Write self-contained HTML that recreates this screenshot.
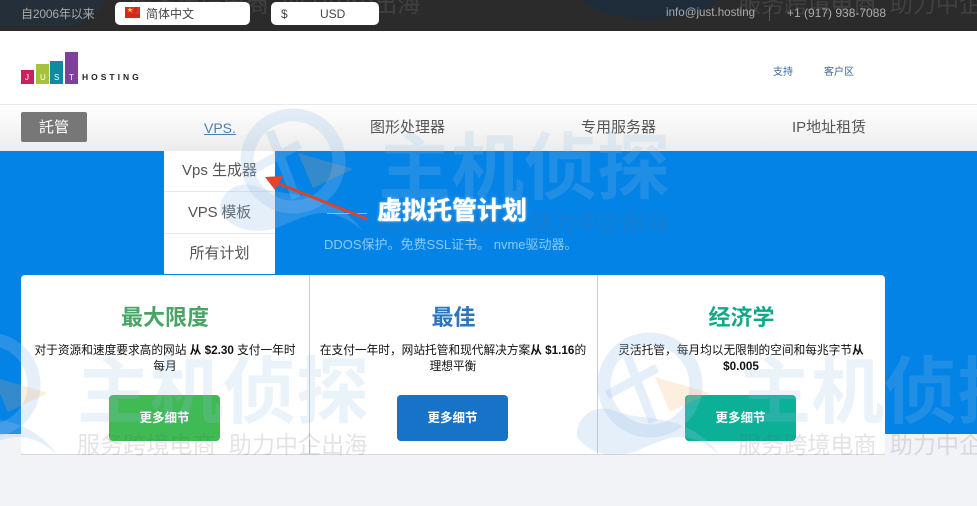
<!DOCTYPE html>
<html lang="zh"><head><meta charset="utf-8"><style>
*{box-sizing:border-box;margin:0;padding:0}
html,body{width:977px;height:506px;overflow:hidden;background:#f1f3f7}
body{position:relative;font-family:"Liberation Sans","Noto Sans CJK SC",sans-serif}
.a{position:absolute;white-space:nowrap}
.c{text-align:center}
.card{position:absolute;top:275px;height:179px;background:#fff}
.btn{position:absolute;top:395px;width:111px;height:46px;border-radius:4px;color:#fff;font-weight:bold;font-size:12.5px;line-height:46px;text-align:center}
.h{position:absolute;top:303px;font-size:22px;font-weight:bold;line-height:30px;text-align:center}
.p{position:absolute;top:343px;font-size:11.7px;line-height:16px;text-align:center;color:#111;white-space:nowrap}
.nav{top:118px;font-size:15px;line-height:20px;color:#555}
.dd{left:164px;width:111px;text-align:center;font-size:15px;line-height:20px;color:#555}
.wm{position:absolute;pointer-events:none;z-index:20}
.wm b{position:absolute;white-space:nowrap;font-family:"Noto Sans CJK SC",sans-serif}
.big{font-size:73px;line-height:80px;font-weight:700;color:rgba(150,190,230,.2);left:0;top:0}
.sub{font-size:23.1px;line-height:28px;font-weight:400;word-spacing:8px;color:rgba(100,100,110,.18);left:0;top:85px}
.top{font-size:23.1px;line-height:28px;font-weight:400;word-spacing:8px;color:rgba(255,255,255,.1)}
</style></head><body>
<div class="a" style="left:0;top:0;width:977px;height:31px;background:#2b2b2b"></div>
<div class="a" style="left:0;top:-30px;width:112px;height:56px;border-radius:0 0 50px 0;background:#252f3a"></div>
<div class="a" style="left:575px;top:-45px;width:150px;height:64px;border-radius:50%;background:#1f2c39"></div>
<div class="a" style="left:21px;top:6px;font-size:12px;line-height:16px;color:#aaa;letter-spacing:-.15px">自2006年以来</div>
<div class="a" style="left:115px;top:2px;width:135px;height:23px;background:#fff;border-radius:5px"></div>
<div class="a" style="left:125px;top:7px;width:15px;height:11px;background:#d8261c"></div>
<div class="a" style="left:127px;top:7px;font-size:6px;line-height:8px;color:#f6d23a">★</div>
<div class="a" style="left:146px;top:6px;font-size:12px;line-height:16px;color:#444">简体中文</div>
<div class="a" style="left:271px;top:2px;width:108px;height:23px;background:#fff;border-radius:5px"></div>
<div class="a" style="left:281px;top:6px;font-size:12px;line-height:16px;color:#444">$</div>
<div class="a" style="left:320px;top:6px;font-size:12px;line-height:16px;color:#444">USD</div>
<div class="a" style="left:666px;top:5px;font-size:11.6px;line-height:16px;color:#aaa">info@just.hosting</div>
<div class="a" style="left:769px;top:7px;width:1px;height:14px;background:#555"></div>
<div class="a" style="left:787px;top:5px;font-size:12px;line-height:16px;color:#aaa">+1 (917) 938-7088</div>

<div class="a" style="left:0;top:31px;width:977px;height:73px;background:#fff"></div>
<div class="a" style="left:21px;top:70px;width:13px;height:14px;background:#c9215f"></div>
<div class="a" style="left:36px;top:64px;width:13px;height:20px;background:#a6c13b"></div>
<div class="a" style="left:50px;top:61px;width:13px;height:23px;background:#0f8aa3"></div>
<div class="a" style="left:65px;top:52px;width:13px;height:32px;background:#7d4199"></div>
<div class="a" style="left:25px;top:73px;font-size:8px;line-height:10px;color:#fff">J</div>
<div class="a" style="left:40px;top:73px;font-size:8px;line-height:10px;color:#fff">U</div>
<div class="a" style="left:54px;top:73px;font-size:8px;line-height:10px;color:#fff">S</div>
<div class="a" style="left:69px;top:73px;font-size:8px;line-height:10px;color:#fff">T</div>
<div class="a" style="left:82px;top:72px;font-size:8.5px;line-height:11px;letter-spacing:3px;color:#222;font-weight:bold">HOSTING</div>
<div class="a" style="left:773px;top:65px;font-size:10px;line-height:15px;color:#3a6a96">支持</div>
<div class="a" style="left:824px;top:65px;font-size:10px;line-height:15px;color:#3a6a96">客户区</div>

<div class="a" style="left:0;top:104px;width:977px;height:47px;border-top:1px solid #e8e8e8;background:linear-gradient(#fff,#ececec)"></div>
<div class="a c" style="left:21px;top:112px;width:66px;height:30px;background:#777;border-radius:2px;color:#fff;font-size:15px;line-height:31px">託管</div>
<div class="a nav" style="left:204px;font-size:14px;color:#4d7ea8;text-decoration:underline">VPS.</div>
<div class="a nav" style="left:370px">图形处理器</div>
<div class="a nav" style="left:581px">专用服务器</div>
<div class="a nav" style="left:792px">IP地址租赁</div>

<div class="a" style="left:0;top:151px;width:977px;height:283px;background:#0483e6"></div>
<div class="a" style="left:164px;top:151px;width:111px;height:123px;background:#fff"></div>
<div class="a" style="left:164px;top:191px;width:111px;height:1px;background:#e8e8e8"></div>
<div class="a" style="left:164px;top:233px;width:111px;height:1px;background:#e8e8e8"></div>
<div class="a dd" style="top:161px">Vps 生成器</div>
<div class="a dd" style="top:203px;letter-spacing:-.2px">VPS 模板</div>
<div class="a dd" style="top:244px">所有计划</div>

<div class="a" style="left:327px;top:213px;width:40px;height:1px;background:#7fbdf0"></div>

<div class="card" style="left:21px;width:288px;border-radius:4px 0 0 4px"></div>
<div class="card" style="left:310px;width:287px"></div>
<div class="card" style="left:598px;width:287px;border-radius:0 4px 4px 0"></div>
<div class="a" style="left:309px;top:275px;width:1px;height:179px;background:#c9cdd1"></div>
<div class="a" style="left:597px;top:275px;width:1px;height:179px;background:#c9cdd1"></div>
<div class="a" style="left:21px;top:454px;width:864px;height:1px;background:#d8dadd"></div>

<div class="h" style="left:21px;width:288px;color:#48a565">最大限度</div>
<div class="h" style="left:310px;width:287px;color:#2a75bd">最佳</div>
<div class="h" style="left:598px;width:287px;color:#12a88a">经济学</div>
<div class="p" style="left:21px;width:288px">对于资源和速度要求高的网站 <b>从 $2.30</b> 支付一年时<br>每月</div>
<div class="p" style="left:309px;width:288px">在支付一年时，网站托管和现代解决方案<b>从 $1.16</b>的<br>理想平衡</div>
<div class="p" style="left:597px;width:288px">灵活托管，每月均以无限制的空间和每兆字节<b>从<br>$0.005</b></div>
<div class="btn" style="left:109px;background:#3fba54">更多细节</div>
<div class="btn" style="left:397px;background:#1773c7">更多细节</div>
<div class="btn" style="left:685px;background:#0bb096">更多细节</div>

<svg class="wm" style="left:0;top:0;width:977px;height:506px" viewBox="0 0 977 506" fill="none">
<defs><g id="w">
<circle cx="75" cy="60" r="46" stroke="rgb(150,190,230)" stroke-opacity=".25" stroke-width="13"/>
<path d="M52 30L78 97M32 70L82 43" stroke="rgb(150,190,230)" stroke-opacity=".25" stroke-width="9"/>
<path d="M2 112C0 90 22 78 40 86C70 98 110 85 145 130C110 100 90 115 70 122C50 133 20 135 2 112Z" fill="rgb(150,190,230)" fill-opacity=".25"/>
<path d="M80 52L135 68L95 87Z" fill="rgb(245,170,90)" fill-opacity=".2"/>
</g></defs>
<use href="#w" x="218" y="101"/>
<use href="#w" x="-87" y="325"/>
<use href="#w" x="575" y="325"/>
</svg>

<div class="wm" style="left:378px;top:122px"><b class="big">主机侦探</b><b class="sub">服务跨境电商 助力中企出海</b></div>
<div class="wm" style="left:77px;top:346px"><b class="big">主机侦探</b><b class="sub" style="top:83px">服务跨境电商 助力中企出海</b></div>
<div class="wm" style="left:738px;top:346px"><b class="big">主机侦探</b><b class="sub" style="top:83px">服务跨境电商 助力中企出海</b></div>
<div class="wm" style="left:130px;top:-12px"><b class="top">服务跨境电商 助力中企出海</b></div>
<div class="wm" style="left:738px;top:-12px"><b class="top">服务跨境电商 助力中企出海</b></div>

<div class="a" style="z-index:30;left:377px;top:195px;font-size:25px;line-height:32px;font-weight:bold;color:#fff;-webkit-text-stroke:.4px #fff;text-shadow:0 0 3px rgba(255,255,255,.5)">虚拟托管计划</div>
<div class="a" style="z-index:30;left:324px;top:236px;font-size:13px;line-height:17px;color:#8ccaf5">DDOS保护。免费SSL证书。 nvme驱动器。</div>
<svg class="wm" style="left:0;top:0;width:977px;height:506px;z-index:31" viewBox="0 0 977 506" fill="none">
<path d="M367 219L277 183" stroke="#d9442f" stroke-width="3"/>
<path d="M265 177L283 176L275 190Z" fill="#e8432b"/>
</svg>
</body></html>
